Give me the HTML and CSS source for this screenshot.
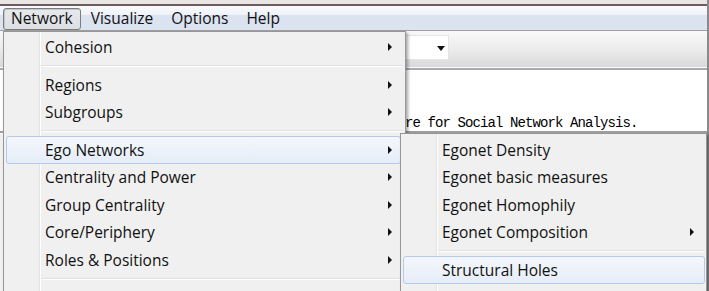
FILE: index.html
```html
<!DOCTYPE html>
<html lang="en">
<head>
    <meta charset="UTF-8">
    <title>UCINET - Network menu</title>
    <link rel="stylesheet" href="styles.css">
</head>
<body>

    <div class="window">
        <div class="frame-top"></div>

        <div class="menubar">
            <span class="mb-item open">Network</span>
            <span class="mb-item">Visualize</span>
            <span class="mb-item">Options</span>
            <span class="mb-item">Help</span>
        </div>

        <div class="toolbar">
            <div class="combo"><span class="caret"></span></div>
        </div>

        <div class="content">
            <div class="log">UCINET 6 for Windows -- Software for Social Network Analysis.</div>
        </div>

        <div class="grid"></div>
    </div>

    <!-- Network menu -->
    <div class="menu main">
        <div class="item more">Cohesion</div>
        <div class="sep"></div>
        <div class="item more">Regions</div>
        <div class="item more">Subgroups</div>
        <div class="sep"></div>
        <div class="item more hot">Ego Networks</div>
        <div class="item more">Centrality and Power</div>
        <div class="item more">Group Centrality</div>
        <div class="item more">Core/Periphery</div>
        <div class="item more">Roles &amp; Positions</div>
        <div class="sep"></div>
        <div class="item">Triad Census</div>
    </div>

    <!-- Ego Networks submenu -->
    <div class="menu sub">
        <div class="item">Egonet Density</div>
        <div class="item">Egonet basic measures</div>
        <div class="item">Egonet Homophily</div>
        <div class="item more">Egonet Composition</div>
        <div class="sep"></div>
        <div class="item hot">Structural Holes</div>
        <div class="item">Ego-based Structural Holes</div>
    </div>

</body>
</html>
```

FILE: styles.css
```css
* { box-sizing: border-box; }
body { margin: 0; width: 709px; height: 291px; overflow: hidden; position: relative; font-family: "Open Sans", "Noto Sans", sans-serif; font-size: 15.5px; color: #111; background: #f0f0f0; }

.window { height: 291px; display: flex; flex-direction: column; border-right: 2px solid #8a8a8a; }
.frame-top { height: 6px; background: #e8e5e2; border-bottom: 2px solid #6c5c5c; }

.menubar { height: 25px; display: flex; align-items: flex-end; padding-left: 3px; background: linear-gradient(#f8f9fc, #f0f3f9 35%, #dbe2f0 40%, #dde4f1); border-bottom: 1px solid #a0a0a4; }
.mb-item { height: 22px; line-height: 19px; padding: 0 7px; border: 1px solid transparent; border-radius: 3px; margin-right: 2px; }
.mb-item.open { border-color: #7c7c7c; background: linear-gradient(#e6e8ec, #dcdfe4); box-shadow: inset 1px 1px 0 #c4c6ca; }

.toolbar { height: 37px; padding: 4px 0 0 405px; background: linear-gradient(#f9f9f9, #ececec 50%, #d9d9d9); border-bottom: 1px solid #fdfdfd; }
.combo { width: 44px; height: 25px; background: #fff; border: 1px solid #e4e4e4; position: relative; }
.caret { position: absolute; left: 31px; top: 10px; border-top: 5px solid #111; border-left: 4px solid transparent; border-right: 4px solid transparent; }

.content { height: 65px; background: #fff; border-top: 2px solid #a9a9b0; border-bottom: 2px solid #a0a0a0; padding: 45px 0 0 180px; }
.log { font-family: "Liberation Mono", "DejaVu Sans Mono", monospace; font-size: 14px; letter-spacing: -0.9px; line-height: 16px; color: #000; white-space: pre; }

.grid { flex: 1; background: #f0f0f0; border-top: 1px solid #fff; }

/* popup menus, clipped by the window bottom */
.menu { position: absolute; overflow: hidden; background-color: #f0f0f0; border: 1px solid #979797; border-bottom: 0; box-shadow: 2px 2px 3px rgba(0, 0, 0, 0.35); padding: 1.5px 0 0;
    background-image: linear-gradient(to right, transparent 35px, #e2e3e3 35px, #e2e3e3 36px, #fff 36px, #fff 37px, transparent 37px); }
.main { left: 3px; top: 31px; width: 403px; height: 260px; }
.sub { left: 400px; top: 133px; width: 307px; height: 158px; padding-top: 2px; }

.item { position: relative; flex-shrink: 0; height: 27.5px; display: flex; align-items: center; padding-left: 38px; margin: 0 4px 0 2px; border: 1px solid transparent; border-radius: 3px; white-space: nowrap; }
.sub .item { margin-right: 1px; }
.item.hot { border-color: #b2cbed; background: linear-gradient(#f4f7fc, #e5edf8); }
.item.more::after { content: ""; position: absolute; right: 8px; top: 50%; margin-top: -4px; border-left: 4px solid #111; border-top: 4px solid transparent; border-bottom: 4px solid transparent; }
.sub .item.more::after { right: 10px; }

.sep { height: 10px; padding: 4px 2px 0 37px; }
.sep::before { content: ""; display: block; border-top: 1px solid #e0e0e0; border-bottom: 1px solid #fff; }
```
